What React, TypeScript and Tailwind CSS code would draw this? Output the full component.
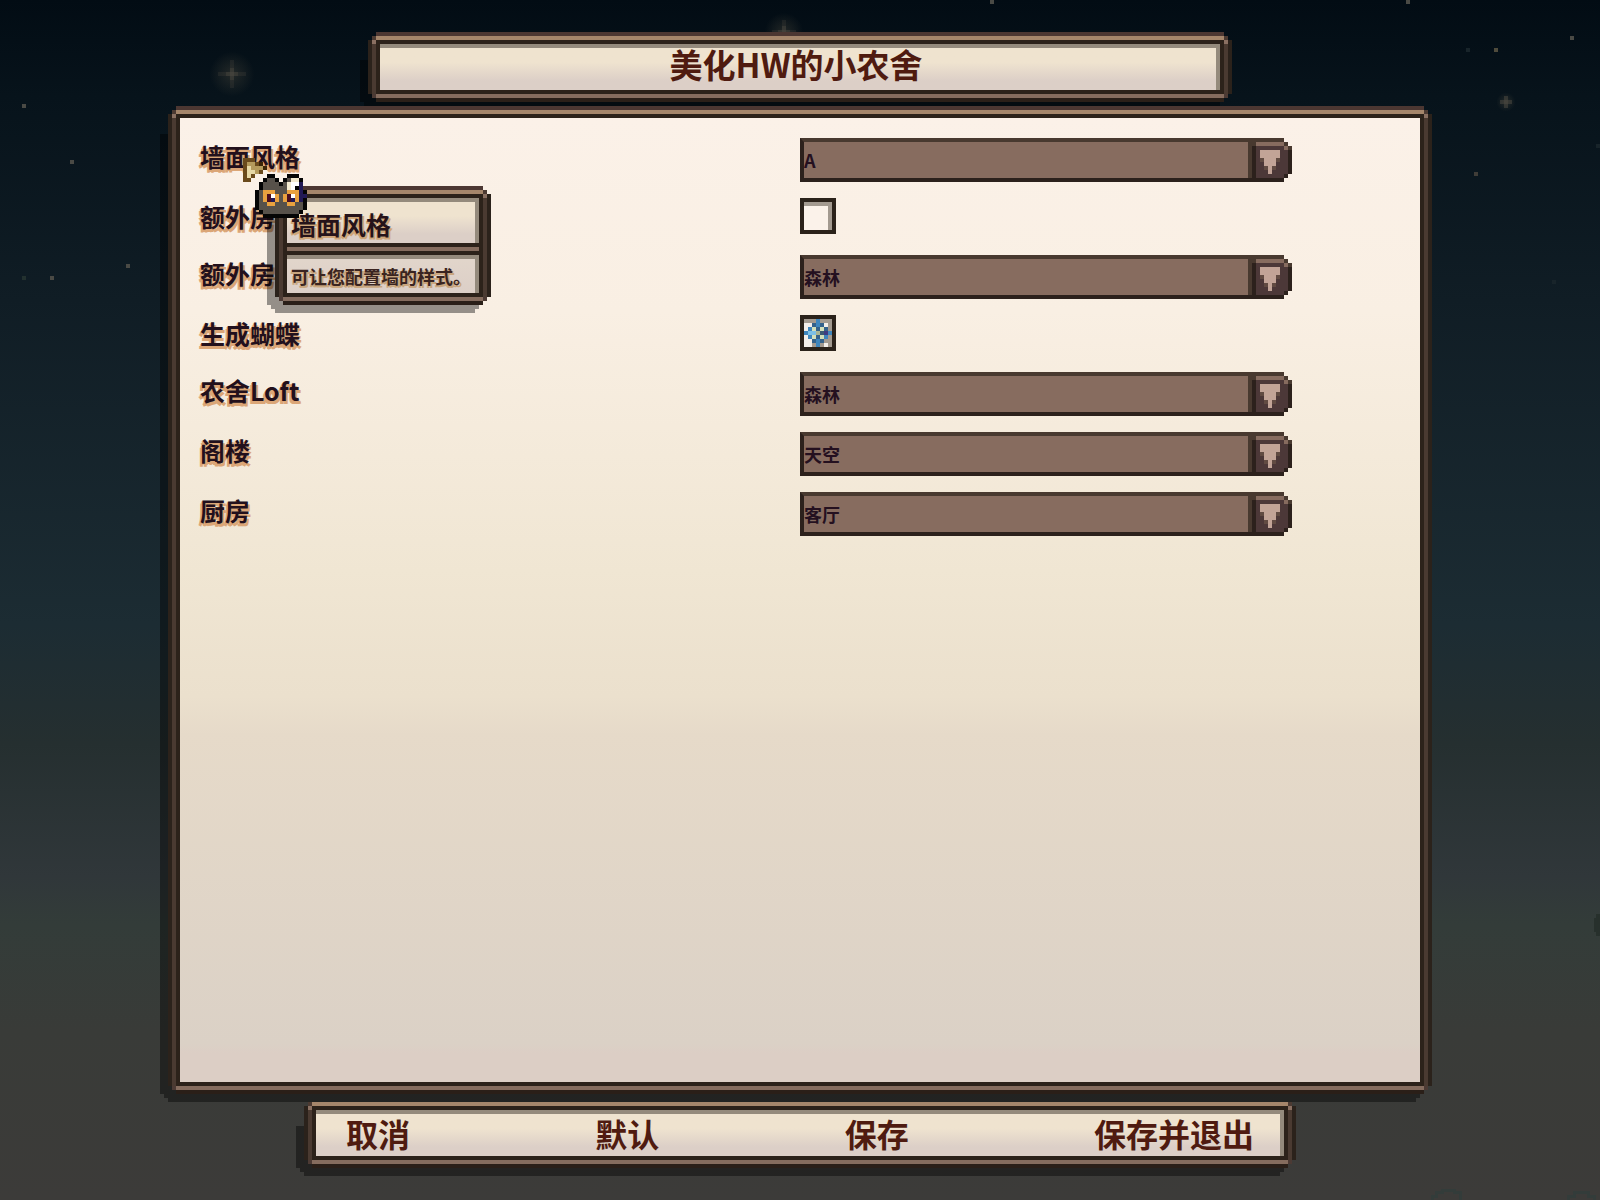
import React from "react";
import clsx from "clsx";

const CELL = 4;

const ARROW_COLORS: Record<string, string> = {
  b: "#48392f",
  d: "#2c211c",
  l: "#876c5f",
  m: "#4c3838",
  s: "#614b42",
  p: "#c2a497",
};

const ARROW = [
  "bbbbbbbbb..",
  "bblllllllb.",
  "bdmmmmmmmlb",
  "bdmpppppmmd",
  "bdmpppppmmd",
  "bdmspppsmmd",
  "bdmmpppmmmd",
  "bdmmspsmmmd",
  "bdmmmpmmmmd",
  "bdmmmmmmmd.",
  "ddddddddd..",
];

const BUTTERFLY_COLORS: Record<string, string> = {
  w: "#f4efea",
  g: "#a39a90",
  b: "#3f86bd",
  d: "#34628c",
  l: "#7cc0e6",
  c: "#d3dfba",
  o: "#a9b491",
  k: "#3a5a74",
  v: "#3f3b80",
};

const BUTTERFLY = [
  "gggbggg",
  "wwdbdwg",
  "wbcdcdg",
  "bllokvb",
  "wbcdcbg",
  "wwdbdgg",
  "wwgbgwg",
];

const CURSOR_COLORS: Record<string, string> = {
  n: "#6a4a1c",
  e: "#3b2508",
  t: "#b49a5c",
  c: "#e6d8a6",
  k: "#050505",
  g: "#57514a",
  w: "#ffffff",
  y: "#f3ead0",
  v: "#221a55",
  o: "#e9a13f",
  r: "#4a0f22",
};

const CURSOR = [
  "nnn.............",
  "nttne...........",
  "ncttte..........",
  "ncctn...........",
  "ncn...kk...kkk..",
  "nn...kggk.kgyyk.",
  "....kggggkgywwv.",
  "....kggggggywkv.",
  "...kgooogggooovk",
  "...kgorwogorwovv",
  "...kgorvogorvovk",
  "...kggoogggooggk",
  "...kgggggggggggk",
  "....kgggggggggk.",
  ".....kkkkkkkkk..",
];

const STARS = [
  { x: 22, y: 104, c: "#4a4a45" },
  { x: 70, y: 160, c: "#4a4a45" },
  { x: 126, y: 264, c: "#4a4a45" },
  { x: 50, y: 276, c: "#4a4a45" },
  { x: 22, y: 276, c: "#23312f" },
  { x: 990, y: 0, c: "#4a4a45" },
  { x: 1406, y: 0, c: "#4a4a45" },
  { x: 1570, y: 36, c: "#4a4a45" },
  { x: 1494, y: 48, c: "#4f4b3c" },
  { x: 1466, y: 48, c: "#18242a" },
  { x: 1474, y: 172, c: "#403d38" },
  { x: 1596, y: 144, c: "#18242a" },
  { x: 1552, y: 280, c: "#18242a" },
];

const GLOWS = [
  { x: 232, y: 74, r: 14 },
  { x: 784, y: 32, r: 12 },
  { x: 1506, y: 102, r: 6 },
];

const OPTIONS = [
  { id: "wall", label: "墙面风格", value: "A" },
  { id: "extra-room", label: "额外房", checked: false },
  { id: "extra-style", label: "额外房", value: "森林" },
  { id: "butterfly", label: "生成蝴蝶", checked: true },
  { id: "loft", label: "农舍Loft", value: "森林" },
  { id: "attic", label: "阁楼", value: "天空" },
  { id: "kitchen", label: "厨房", value: "客厅" },
];

const ACTIONS = ["取消", "默认", "保存", "保存并退出"];

type SpriteProps = {
  rows: string[];
  colors: Record<string, string>;
  className?: string;
};

function Sprite({ rows, colors, className }: SpriteProps) {
  const width = rows[0].length;
  return (
    <svg
      aria-hidden="true"
      width={width * CELL}
      height={rows.length * CELL}
      viewBox={`0 0 ${width} ${rows.length}`}
      shapeRendering="crispEdges"
      className={className}
    >
      {rows.map((row, y) =>
        row
          .split("")
          .map((c, x) =>
            colors[c] ? (
              <rect key={`${x}-${y}`} x={x} y={y} width="1" height="1" fill={colors[c]} />
            ) : null
          )
      )}
    </svg>
  );
}

function Sky() {
  return (
    <svg
      aria-hidden="true"
      className="absolute inset-0 -z-10 h-full w-full"
      shapeRendering="crispEdges"
    >
      <defs>
        <radialGradient id="glow">
          <stop offset="0" stopColor="#5a5443" stopOpacity="0.35" />
          <stop offset="1" stopColor="#5a5443" stopOpacity="0" />
        </radialGradient>
      </defs>
      {STARS.map((s) => (
        <rect key={`${s.x}-${s.y}`} x={s.x} y={s.y} width="4" height="4" fill={s.c} />
      ))}
      {GLOWS.map((g) => (
        <g key={g.x}>
          <circle cx={g.x} cy={g.y} r={g.r * 1.6} fill="url(#glow)" />
          <rect x={g.x - g.r} y={g.y - 2} width={g.r * 2} height="4" fill="#4a4940" opacity="0.25" />
          <rect x={g.x - 2} y={g.y - g.r} width="4" height={g.r * 2} fill="#4a4940" opacity="0.25" />
          <rect x={g.x - 6} y={g.y - 2} width="12" height="4" fill="#4a4940" opacity="0.4" />
          <rect x={g.x - 2} y={g.y - 6} width="4" height="12" fill="#4a4940" opacity="0.4" />
        </g>
      ))}
      <path d="M1600 914h-4v4h-2v14h2v4h4z" fill="#27302c" />
      <path
        d="M1432 1200v-4h4v-4h6v-2h12v2h6v8M1568 1200v-4h6v-4h14v4h6v4"
        fill="none"
        stroke="#333c3a"
        strokeWidth="3"
      />
    </svg>
  );
}

const rim =
  "shadow-[0_-4px_0_#a5866b,0_4px_0_#856c5e,-4px_0_0_#4a3a31,4px_0_0_#4a3a31,-4px_-4px_0_#4c3a32,4px_-4px_0_#4c3a32,-4px_4px_0_#4c3a34,4px_4px_0_#4c3a34,0_-8px_0_#4c3732,0_8px_0_#2a1f18,-8px_0_0_#2b221b,8px_0_0_#2b221b]";
const rimNoTop =
  "shadow-[0_-4px_0_#a5866b,0_4px_0_#856c5e,-4px_0_0_#4a3a31,4px_0_0_#4a3a31,-4px_-4px_0_#4c3a32,4px_-4px_0_#4c3a32,-4px_4px_0_#4c3a34,4px_4px_0_#4c3a34,0_8px_0_#2a1f18,-8px_0_0_#2b221b,8px_0_0_#2b221b]";

const plate =
  "bg-linear-to-b from-[#efe3cf] from-40% to-[#dccfc7] to-80% shadow-[inset_-4px_4px_0_#948a7c]";

type FrameProps = {
  children: React.ReactNode;
  className?: string;
  flatTop?: boolean;
};

function Frame({ children, className, flatTop }: FrameProps) {
  return (
    <div className={clsx("relative isolate", className)}>
      {/* stepped drop shadow, down and to the left */}
      <div className="absolute top-5 right-1 -bottom-4 -left-4 -z-10 bg-black/40 [clip-path:polygon(0_0,100%_0,100%_calc(100%-4px),calc(100%-4px)_calc(100%-4px),calc(100%-4px)_100%,8px_100%,8px_calc(100%-4px),4px_calc(100%-4px),4px_calc(100%-8px),0_calc(100%-8px))]" />
      <div
        className={clsx(
          "relative flex h-full flex-col border-4 border-[#2c221a]",
          flatTop ? rimNoTop : rim
        )}
      >
        <div className="absolute -inset-x-2 -top-1 h-1 border-x-4 border-[#8a7062]" />
        {children}
      </div>
    </div>
  );
}

function Dropdown({ id, value }: { id: string; value: string }) {
  return (
    <div className="relative h-11 w-[492px] max-w-full">
      <select
        id={id}
        defaultValue={value}
        className="h-11 w-[calc(100%-8px)] appearance-none border-4 border-r-0 border-t-[#48392f] border-b-[#2c211c] border-l-[#2c211c] bg-[#876c5f] text-lg leading-5 font-bold text-[#24101f] outline-none"
      >
        <option>{value}</option>
      </select>
      <Sprite
        rows={ARROW}
        colors={ARROW_COLORS}
        className="pointer-events-none absolute top-0 right-0"
      />
    </div>
  );
}

function Checkbox({ id, checked }: { id: string; checked: boolean }) {
  return (
    <div className="relative h-9 w-9">
      <input
        id={id}
        type="checkbox"
        defaultChecked={checked}
        className="block h-9 w-9 appearance-none border-4 border-[#2b221a] bg-[#fbf2ea] shadow-[inset_-4px_4px_0_#a39a90]"
      />
      {checked && (
        <Sprite
          rows={BUTTERFLY}
          colors={BUTTERFLY_COLORS}
          className="pointer-events-none absolute top-1 left-1"
        />
      )}
    </div>
  );
}

function Tooltip() {
  return (
    <div role="tooltip" className="absolute top-14 left-[83px] z-10">
      <Frame>
        <div
          className={clsx(
            plate,
            "h-[45px] pt-1 pl-1 text-[25px] leading-[45px] font-bold text-[#26131a] [text-shadow:-1px_2px_0_#cfa679,2px_2px_0_#cfa679]"
          )}
        >
          墙面风格
        </div>
        <div className="h-3 border-y-4 border-[#2c221a] bg-[#856c5e]" />
        <div className="h-[38px] bg-linear-to-b from-[#e2d6cb] to-[#dccfc7] pt-1 pr-2 pl-1 text-lg leading-[34px] font-bold whitespace-nowrap text-[#3a2420] shadow-[inset_-4px_4px_0_#948a7c] [text-shadow:-1px_2px_0_#c9a67e,2px_2px_0_#c9a67e]">
          可让您配置墙的样式。
        </div>
      </Frame>
      <Sprite
        rows={CURSOR}
        colors={CURSOR_COLORS}
        className="pointer-events-none absolute -top-9 -left-10 z-20"
      />
    </div>
  );
}

export default function App() {
  return (
    <div className="relative isolate flex min-h-screen flex-col items-center gap-5 overflow-hidden bg-[linear-gradient(#020c14,#07131b_8%,#101d25_25%,#1c2c33_52%,#252f30_62%,#30373a_73%,#333c39_77%,#393b38_86%,#3c3b39)] py-10 font-['Noto_Sans_CJK_SC',sans-serif]">
      <Sky />

      <Frame className="h-[54px] w-[53%]">
        <h1
          className={clsx(
            plate,
            "flex-1 pr-2 text-center text-[33px] leading-10 font-bold text-[#4f1b10]"
          )}
        >
          美化HW的小农舍
        </h1>
      </Frame>

      <Frame className="flex w-[78%] flex-1 flex-col *:last:flex-1">
        <main className="flex-1 bg-[linear-gradient(#fbf1e8,#f9efe3_20%,#f0e6d3_47%,#ebe0cd_60%,#e6dac9_64%,#dbd1c6_96%,#dccec5_97%)] px-5 py-5">
          {OPTIONS.map((o) => (
            <div
              key={o.id}
              className={clsx(
                "relative grid grid-cols-2",
                o.value ? "h-[60px]" : "h-[57px]"
              )}
            >
              <label
                htmlFor={o.id}
                className="text-[25px] leading-9 font-bold text-[#22101c] [text-shadow:-1px_1px_0_#dba677,-2px_3px_0_#dba677,2px_3px_0_#dba677]"
              >
                {o.label}
              </label>
              {o.value ? (
                <Dropdown id={o.id} value={o.value} />
              ) : (
                <Checkbox id={o.id} checked={!!o.checked} />
              )}
              {o.id === "wall" && <Tooltip />}
            </div>
          ))}
        </main>
      </Frame>

      <Frame flatTop className="h-[54px] w-[61%]">
        <div className={clsx(plate, "flex flex-1 items-center justify-between px-[30px]")}>
          {ACTIONS.map((a) => (
            <button
              key={a}
              type="button"
              className="text-[32px] leading-[46px] font-bold text-[#4f1b10]"
            >
              {a}
            </button>
          ))}
        </div>
      </Frame>
    </div>
  );
}
